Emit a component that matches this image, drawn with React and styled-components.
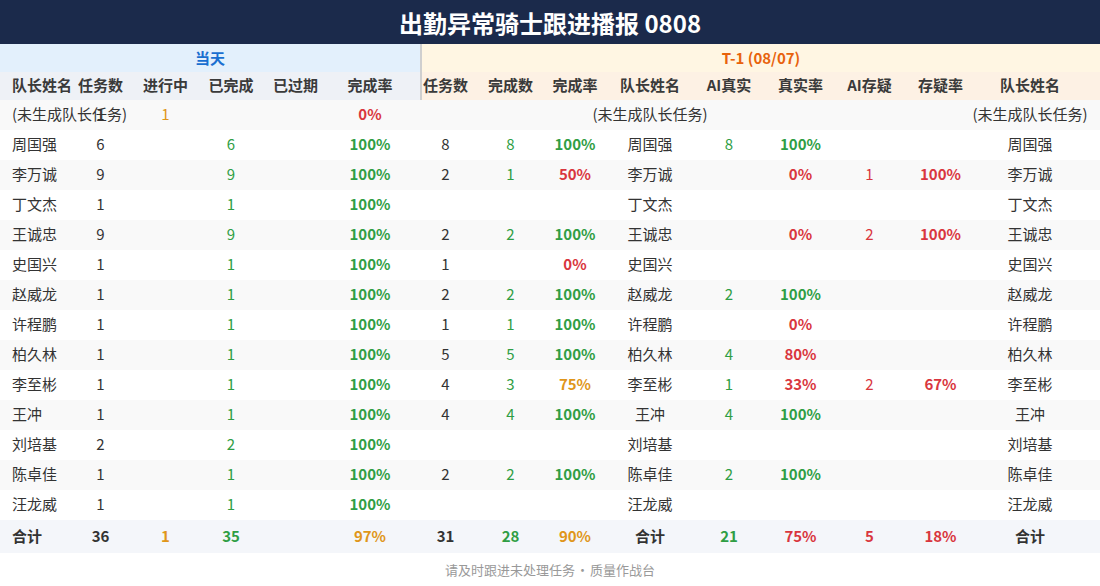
import React from "react";
import styled, { createGlobalStyle } from "styled-components";

const GREEN = "#2f9e44";
const RED = "#d9363e";
const ORANGE = "#e0961a";
const TEXT = "#333";

// column tracks shared by header, data and total rows
const COLUMNS =
  "68px 65px 65px 66px 63px 86px 65px 65px 64px 86px 72px 71px 67px 75px 104px";

const GlobalStyle = createGlobalStyle`
  body {
    margin: 0;
    background: #fff;
    font-family: "Noto Sans CJK SC", "Noto Sans", sans-serif;
    color: ${TEXT};
  }
`;

const Page = styled.div`
  width: 1100px;
  display: flex;
  flex-direction: column;
`;

const TitleBar = styled.div`
  height: 44px;
  background: #1b2a4b;
  color: #fff;
  font-size: 24px;
  font-weight: 700;
  display: flex;
  align-items: center;
  justify-content: center;
`;

const GroupRow = styled.div`
  display: flex;
  height: 28px;
`;

const GroupCell = styled.div`
  width: ${(p) => (p.$tone === "today" ? "420px" : "auto")};
  flex: ${(p) => (p.$tone === "today" ? "none" : "1")};
  background: ${(p) => (p.$tone === "today" ? "#e3f0fc" : "#fff6e3")};
  color: ${(p) => (p.$tone === "today" ? "#1a6fd0" : "#e8620c")};
  border-left: ${(p) => (p.$tone === "today" ? "none" : "2px solid #cfcfcf")};
  font-size: 15px;
  font-weight: 700;
  display: flex;
  align-items: center;
  justify-content: center;
  padding-bottom: 1px;
`;

const HeaderRow = styled.div`
  display: grid;
  grid-template-columns: ${COLUMNS};
  height: 28px;
  background: linear-gradient(
    to right,
    #eef1f6 0 420px,
    #cfcfcf 420px 422px,
    #fdf1e4 422px
  );
`;

const DataRow = styled.div`
  display: grid;
  grid-template-columns: ${COLUMNS};
  height: 30px;
  background: ${(p) => (p.$striped ? "#f9f9f9" : "#fff")};
`;

const TotalRow = styled(DataRow)`
  height: 33px;
  background: #f4f6fa;
`;

const Cell = styled.div`
  display: flex;
  align-items: center;
  justify-content: ${(p) => (p.$align === "left" ? "flex-start" : "center")};
  padding-left: ${(p) => (p.$align === "left" ? "12px" : "0")};
  padding-bottom: 3px;
  white-space: nowrap;
  font-size: 15px;
  font-weight: ${(p) => (p.$bold ? 700 : 400)};
  color: ${(p) => p.$color || TEXT};
`;

const HeadCell = styled(Cell)`
  font-weight: 700;
  color: #3a3a3a;
`;

const Footer = styled.div`
  height: 33px;
  display: flex;
  align-items: center;
  justify-content: center;
  font-size: 13px;
  color: #999;
  word-spacing: -2px;
`;

const heads = [
  "队长姓名", "任务数", "进行中", "已完成", "已过期", "完成率",
  "任务数", "完成数", "完成率", "队长姓名", "AI真实", "真实率", "AI存疑", "存疑率", "队长姓名",
];

const pct = (v) => {
  if (!v) return null;
  const n = parseInt(v, 10);
  if (n >= 100) return GREEN;
  if (n >= 75 && n < 100 && v !== "80%") return ORANGE;
  return RED;
};

const NONE = "(未生成队长任务)";

// [name, total, doing, done, expired, rate, t1Total, t1Done, t1Rate, aiReal, realRate, aiDoubt, doubtRate]
const rows = [
  [NONE, "1", "1", "", "", "0%", "", "", "", "", "", "", ""],
  ["周国强", "6", "", "6", "", "100%", "8", "8", "100%", "8", "100%", "", ""],
  ["李万诚", "9", "", "9", "", "100%", "2", "1", "50%", "", "0%", "1", "100%"],
  ["丁文杰", "1", "", "1", "", "100%", "", "", "", "", "", "", ""],
  ["王诚忠", "9", "", "9", "", "100%", "2", "2", "100%", "", "0%", "2", "100%"],
  ["史国兴", "1", "", "1", "", "100%", "1", "", "0%", "", "", "", ""],
  ["赵威龙", "1", "", "1", "", "100%", "2", "2", "100%", "2", "100%", "", ""],
  ["许程鹏", "1", "", "1", "", "100%", "1", "1", "100%", "", "0%", "", ""],
  ["柏久林", "1", "", "1", "", "100%", "5", "5", "100%", "4", "80%", "", ""],
  ["李至彬", "1", "", "1", "", "100%", "4", "3", "75%", "1", "33%", "2", "67%"],
  ["王冲", "1", "", "1", "", "100%", "4", "4", "100%", "4", "100%", "", ""],
  ["刘培基", "2", "", "2", "", "100%", "", "", "", "", "", "", ""],
  ["陈卓佳", "1", "", "1", "", "100%", "2", "2", "100%", "2", "100%", "", ""],
  ["汪龙威", "1", "", "1", "", "100%", "", "", "", "", "", "", ""],
];

const realColor = (v) => (v === "100%" ? GREEN : RED);

const Row = ({ data, striped }) => {
  const [name, total, doing, done, expired, rate, t1Total, t1Done, t1Rate, aiReal, realRate, aiDoubt, doubtRate] = data;
  return (
    <DataRow $striped={striped}>
      <Cell $align="left">{name}</Cell>
      <Cell>{total}</Cell>
      <Cell $color={ORANGE}>{doing}</Cell>
      <Cell $color={GREEN}>{done}</Cell>
      <Cell>{expired}</Cell>
      <Cell $bold $color={pct(rate)}>{rate}</Cell>
      <Cell>{t1Total}</Cell>
      <Cell $color={GREEN}>{t1Done}</Cell>
      <Cell $bold $color={pct(t1Rate)}>{t1Rate}</Cell>
      <Cell>{name}</Cell>
      <Cell $color={GREEN}>{aiReal}</Cell>
      <Cell $bold $color={realColor(realRate)}>{realRate}</Cell>
      <Cell $color={RED}>{aiDoubt}</Cell>
      <Cell $bold $color={RED}>{doubtRate}</Cell>
      <Cell>{name}</Cell>
    </DataRow>
  );
};

const App = () => (
  <Page>
    <GlobalStyle />
    <TitleBar>出勤异常骑士跟进播报 0808</TitleBar>
    <GroupRow>
      <GroupCell $tone="today">当天</GroupCell>
      <GroupCell $tone="prev">T-1 (08/07)</GroupCell>
    </GroupRow>
    <HeaderRow>
      {heads.map((h, i) => (
        <HeadCell key={i} $align={i === 0 ? "left" : "center"}>
          {h}
        </HeadCell>
      ))}
    </HeaderRow>
    {rows.map((r, i) => (
      <Row key={i} data={r} striped={i % 2 === 0} />
    ))}
    <TotalRow>
      <Cell $align="left" $bold>合计</Cell>
      <Cell $bold>36</Cell>
      <Cell $bold $color={ORANGE}>1</Cell>
      <Cell $bold $color={GREEN}>35</Cell>
      <Cell />
      <Cell $bold $color={ORANGE}>97%</Cell>
      <Cell $bold>31</Cell>
      <Cell $bold $color={GREEN}>28</Cell>
      <Cell $bold $color={ORANGE}>90%</Cell>
      <Cell $bold>合计</Cell>
      <Cell $bold $color={GREEN}>21</Cell>
      <Cell $bold $color={RED}>75%</Cell>
      <Cell $bold $color={RED}>5</Cell>
      <Cell $bold $color={RED}>18%</Cell>
      <Cell $bold>合计</Cell>
    </TotalRow>
    <Footer>请及时跟进未处理任务 · 质量作战台</Footer>
  </Page>
);

export default App;
